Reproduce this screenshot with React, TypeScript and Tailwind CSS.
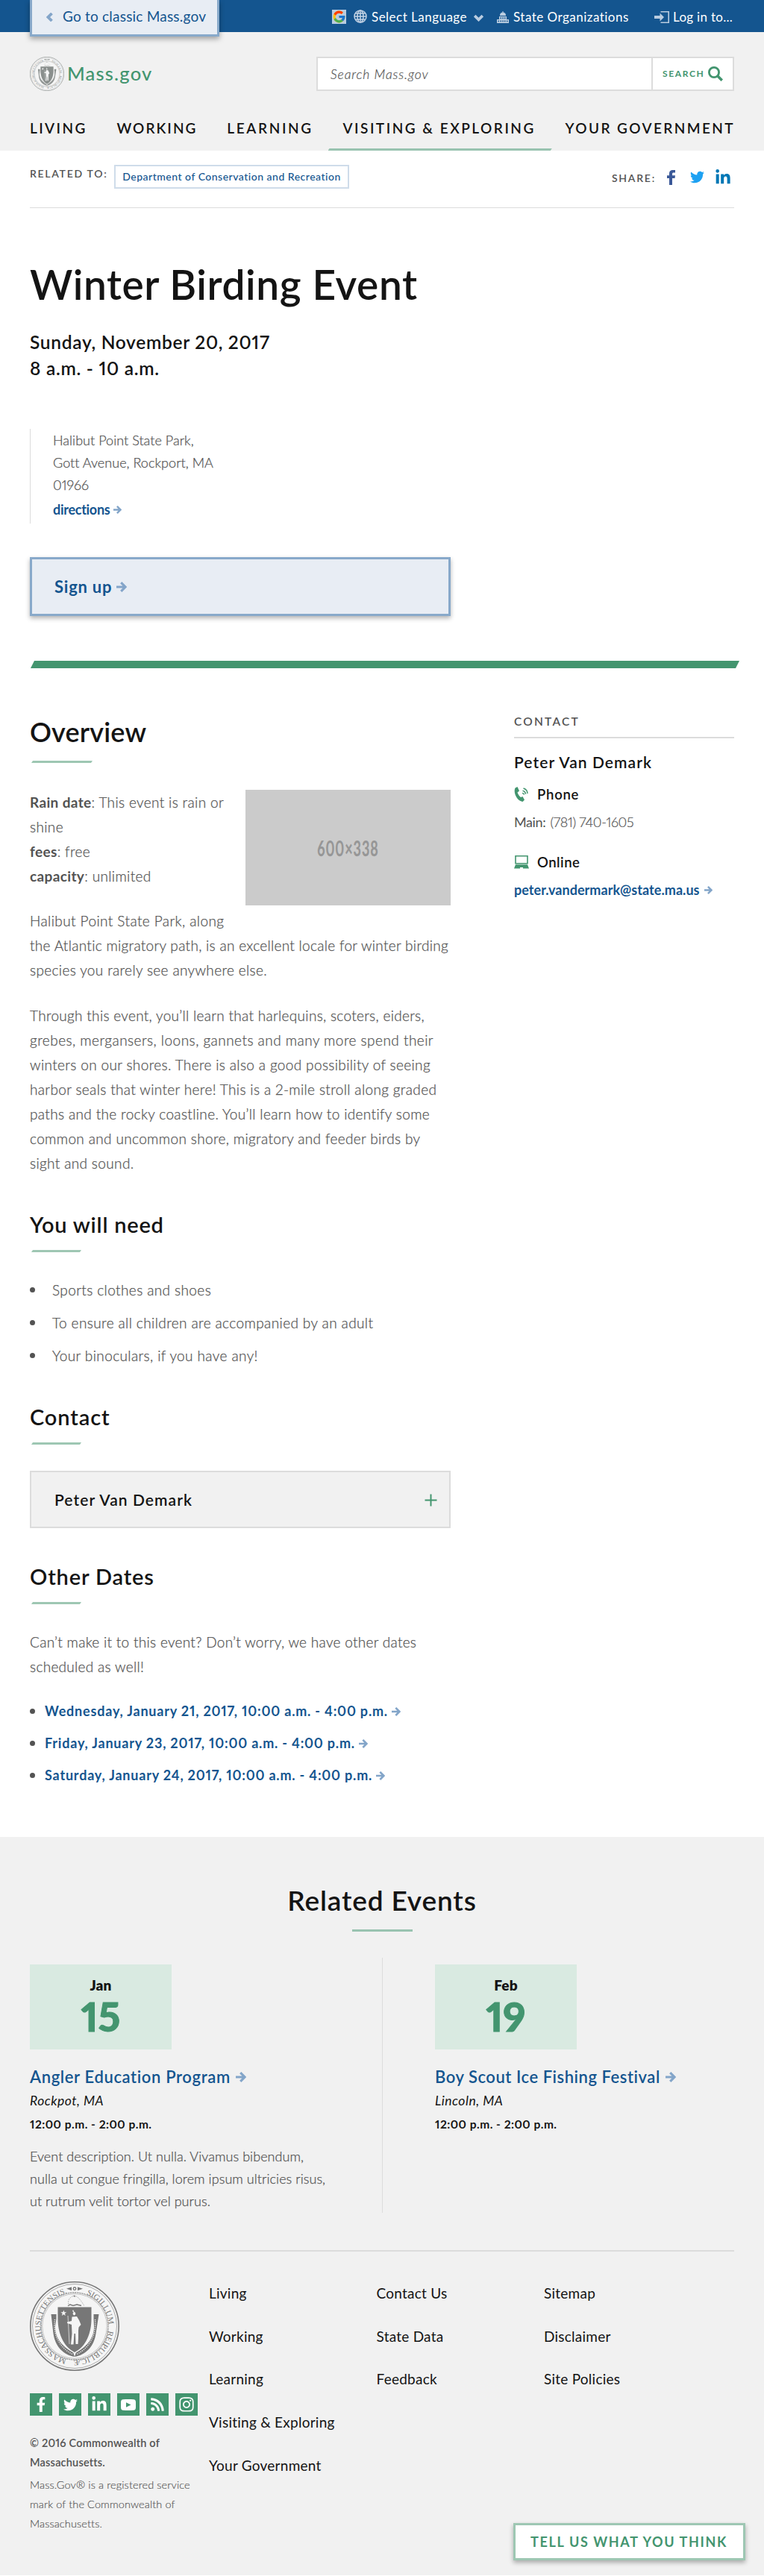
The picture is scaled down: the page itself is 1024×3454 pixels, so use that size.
import type { ReactNode } from "react";
import { FaFacebookF, FaTwitter, FaLinkedinIn, FaRss, FaInstagram } from "react-icons/fa";
import { FcGoogle } from "react-icons/fc";

function Arrow({ size = 11, className = "" }: { size?: number; className?: string }) {
  return (
    <svg width={size} height={size} viewBox="0 0 13 13" className={"inline-block shrink-0 " + className}>
      <path d="M0 6.5H10M5.8 1L11.2 6.5L5.8 12" fill="none" stroke="#83a5c9" strokeWidth="2.9" />
    </svg>
  );
}

function Seal({ size, color }: { size: number; color: string }) {
  const id = "ring" + size;
  return (
    <svg width={size} height={size} viewBox="0 0 120 120" fill="none" className="block shrink-0">
      <defs>
        <path id={id} d="M60 14.5A45.5 45.5 0 1 1 59.9 14.5" />
      </defs>
      <circle cx="60" cy="60" r="60" fill="#f5f5f5" />
      <circle cx="60" cy="60" r="59.2" stroke={color} strokeWidth="1.6" />
      <circle cx="60" cy="60" r="56.5" stroke={color} strokeWidth="0.6" />
      <circle cx="60" cy="60" r="45" stroke={color} strokeWidth="1.4" strokeDasharray="0.8 0.7" />
      <circle cx="60" cy="60" r="43.3" stroke={color} strokeWidth="0.4" />
      <g fill={color} className="font-['Liberation_Serif',serif] text-[10.5px]">
        <text>
          <textPath href={"#" + id} startOffset="16" textLength="53" lengthAdjust="spacingAndGlyphs">SIGILLUM</textPath>
        </text>
        <text>
          <textPath href={"#" + id} startOffset="77" textLength="67" lengthAdjust="spacingAndGlyphs">REIPUBLICÆ</textPath>
        </text>
        <text>
          <textPath href={"#" + id} startOffset="153" textLength="122" lengthAdjust="spacingAndGlyphs">MASSACHUSETTENSIS.</textPath>
        </text>
      </g>
      <circle cx="60" cy="9.8" r="1.8" stroke={color} strokeWidth="1.3" />
      <path d="M49 9.8L56 7.4V12.2ZM71 9.8L64 7.4V12.2Z" fill={color} />
      <path d="M52 31C50 24 55 20 60 19C66 21 70 28 73 33" stroke={color} strokeWidth="0.8" strokeDasharray="2 1" opacity="0.6" />
      <path d="M51 33L54 31L58 32.5L63 31L69 32.5" stroke={color} strokeWidth="1.4" />
      <path d="M58 20L60 18.5L61 21Z" fill={color} />
      <path d="M28.5 44H35.5V50L34 60C33.5 72 40 86 58 95L60 101C46 99 34 88 31.5 70Z" fill={color} />
      <path d="M92.5 44H85.5V50L86 60C86.5 72 80 86 62 95L60 101C74 99 86 88 88.5 70Z" fill={color} />
      <path d="M33.5 51C31 68 37 88 58 98M87.5 51C89 68 83 88 62 98" stroke="#f5f5f5" strokeWidth="1.4" strokeDasharray="1.2 1.4" />
      <path d="M36 33.5H84V50C84 70 77 88 60 96.5C43 88 36 70 36 50Z" fill="#f5f5f5" />
      <path d="M37.5 34.5H82.5V50C82.5 68 76 87 60 95C44 87 37.5 68 37.5 50Z" fill={color} />
      <path d="M45.3 38.5L46.3 41.3H49.2L46.9 43L47.8 46L45.3 44.2L42.8 46L43.7 43L41.4 41.3H44.3Z" fill="#f5f5f5" />
      <path d="M51 46L53 84" stroke="#f5f5f5" strokeWidth="0.7" />
      <path d="M59.5 41A1.8 2.2 0 1 1 59.4 41ZM56.5 47.5L63 47L66 52L68.5 58L65.500 61.500L65 66L65 76L64.5 84H61.5L61 70L59.5 70L58.5 84.5H55L56.5 70L56 58L50 56V54.5L56 53Z" fill="#f5f5f5" />
      <path d="M57 40L58 38L60 42Z" fill="#f5f5f5" />
    </svg>
  );
}

function Rule({ className = "" }: { className?: string }) {
  return <div className={"h-[3px] bg-[#9ec7b3] [clip-path:polygon(2px_0,100%_0,calc(100%_-_2px)_100%,0_100%)] " + className} />;
}

function Heading({ children, className = "" }: { children: ReactNode; className?: string }) {
  return (
    <div className={className}>
      <h2 className="text-[29px] font-semibold leading-[34px] text-[#141414]">{children}</h2>
      <Rule className="ml-0.5 mt-[17px] w-[67px]" />
    </div>
  );
}

function NavItem({ children, active, className }: { children: ReactNode; active?: boolean; className: string }) {
  return (
    <a className={"relative " + className}>
      {children}
      {active && (
        <span className="absolute -left-5 -right-[22px] bottom-0 h-[3px] bg-[#99c3b0] [clip-path:polygon(2px_0,100%_0,calc(100%_-_2px)_100%,0_100%)]" />
      )}
    </a>
  );
}

function Bullet() {
  return <span className="size-[7px] shrink-0 rounded-full bg-[#535353]" />;
}

function SocialBox({ children }: { children: ReactNode }) {
  return <span className="flex size-[30px] items-center justify-center bg-[#43956f] text-white">{children}</span>;
}

function EventCard(p: { month: string; day: string; title: string; titleClass: string; place: string; time: string; children?: ReactNode }) {
  return (
    <div>
      <div className="h-[114px] w-[190px] bg-[#d9eae1] pt-4 text-center">
        <div className="text-[19px] font-extrabold leading-6 tracking-[0.2px] text-[#141414]">{p.month}</div>
        <div className="mt-[3px] text-[54px] font-black leading-[54px] text-[#43956f] [-webkit-text-stroke:1px]">{p.day}</div>
      </div>
      <h3 className={"mt-[22px] flex items-center gap-[7px] whitespace-nowrap text-[22px] font-semibold leading-[30px] text-[#14558f] " + p.titleClass}>
        {p.title}
        <Arrow size={14} />
      </h3>
      <div className="mt-0.5 text-[17.5px] italic leading-[30px] tracking-[0.5px] text-[#141414]">{p.place}</div>
      <div className="mt-px text-[15.5px] font-bold leading-[30px] tracking-[0.5px] text-[#141414]">{p.time}</div>
      {p.children}
    </div>
  );
}

const DATES = [
  "Wednesday, January 21, 2017, 10:00 a.m. - 4:00 p.m.",
  "Friday, January 23, 2017, 10:00 a.m. - 4:00 p.m.",
  "Saturday, January 24, 2017, 10:00 a.m. - 4:00 p.m.",
];
const NEEDS = ["Sports clothes and shoes", "To ensure all children are accompanied by an adult", "Your binoculars, if you have any!"];
const LINKS = [
  ["Living", "Working", "Learning", "Visiting & Exploring", "Your Government"],
  ["Contact Us", "State Data", "Feedback"],
  ["Sitemap", "Disclaimer", "Site Policies"],
];

export default function App() {
  return (
    <div className="relative h-[3454px] w-[1024px] overflow-hidden bg-white font-[Lato,sans-serif] proportional-nums text-[#535353]">
      <div className="relative z-10 flex h-[43px] bg-[#14558f] px-10 text-[17px] leading-[45px] tracking-[0.48px] text-white">
        <a className="flex h-[49px] w-[254px] items-start border-x-[3px] border-b-[3px] border-[#88a9ca] bg-[#e8edf4] pl-[19px] text-[19px] leading-[43px] tracking-[0.21px] text-[#14558f] shadow-[0_3px_7px_rgba(0,0,0,0.35)]">
          <svg width="9" height="12" viewBox="0 0 9 12" className="mr-[13px] mt-[17px]">
            <path d="M7.5 1L2.5 6L7.5 11" fill="none" stroke="#83a5c9" strokeWidth="3.8" />
          </svg>
          Go to classic Mass.gov
        </a>
        <span className="ml-[151px] mt-[13px] flex size-[19px] items-center justify-center bg-[#b9cce0]">
          <FcGoogle size={19} />
        </span>
        <svg width="18" height="18" viewBox="0 0 18 18" fill="none" stroke="#c3d3e5" strokeWidth="1.5" className="ml-2.5 mt-[13px]">
          <circle cx="9" cy="9" r="8" />
          <ellipse cx="9" cy="9" rx="4" ry="8" />
          <path d="M9 1V17M1 9H17M2.5 5H15.5M2.5 13H15.5" />
        </svg>
        <span className="ml-1.5">Select Language</span>
        <svg width="13" height="10" viewBox="0 0 13 10" className="ml-[9px] mt-[19px]">
          <path d="M1.2 2L6.5 7.3L11.8 2" fill="none" stroke="#b9cce0" strokeWidth="3.7" />
        </svg>
        <svg width="16" height="16" viewBox="0 0 16 16" fill="#b9cce0" className="ml-[18px] mt-[15px]">
          <path d="M7.5 0h1v1.500A4.200 4.200 0 0 1 12 5.500V6H4V5.500A4.200 4.200 0 0 1 7.500 1.500Z" />
          <path fillRule="evenodd" d="M3 7H13V11H16V16H0V11H3ZM4.500 8.200V10.200H6V8.200ZM7.300 8.200V10.200H8.800V8.200ZM10 8.200V10.200H11.500V8.200ZM1.500 12.500V14.300H3V12.500ZM4.500 12.500V14.300H6V12.500ZM7.300 12.500V14.300H8.800V12.500ZM10 12.500V14.300H11.500V12.500ZM13 12.500V14.300H14.500V12.500Z" />
        </svg>
        <span className="ml-1.5 w-[155px] whitespace-nowrap">State Organizations</span>
        <svg width="20" height="16" viewBox="0 0 20 16" className="ml-[34px] mt-[15px]">
          <path d="M8.5 0.8H19.2V15.2H8.5" fill="none" stroke="#b9cce0" strokeWidth="1.6" />
          <path d="M0 6H7.5V2.5L13 8L7.5 13.5V10H0Z" fill="#b9cce0" />
        </svg>
        <span className="ml-[5px] whitespace-nowrap tracking-[0.3px]">Log in to...</span>
      </div>

      <header className="h-[159px] bg-[#f1f1f1] px-10 pt-[33px]">
        <div className="flex h-[46px] justify-between">
          <div className="flex">
            <Seal size={46} color="#8a8f8d" />
            <span className="ml-1 text-[25.5px] font-medium leading-[45px] tracking-[1.2px] text-[#43956f]">Mass.gov</span>
          </div>
          <div className="flex h-[46px] w-[560px] border-2 border-[#dcdcdc] bg-white">
            <span className="flex-1 pl-[17px] text-[17.5px] font-light italic leading-[43px] tracking-[0.9px] text-[#535353] [-webkit-text-stroke:0.2px]">Search Mass.gov</span>
            <span className="flex w-[109px] items-center border-l-2 border-[#dcdcdc] pl-[13px] text-[12px] font-bold tracking-[1.65px] text-[#43956f]">
              SEARCH
              <svg width="20" height="20" viewBox="0 0 20 20" fill="none" stroke="#43956f" className="ml-1">
                <circle cx="8" cy="8" r="6.6" strokeWidth="2.8" />
                <path d="M12.5 12.5L18.8 18.8" strokeWidth="3.6" />
              </svg>
            </span>
          </div>
        </div>
        <nav className="-mr-px mt-5 flex h-[60px] justify-between whitespace-nowrap text-[19px] font-semibold leading-[59px] text-[#141414]">
          <NavItem className="tracking-[2.4px]">LIVING</NavItem>
          <NavItem className="tracking-[2.05px]">WORKING</NavItem>
          <NavItem className="tracking-[2.65px]">LEARNING</NavItem>
          <NavItem active className="tracking-[2.5px]">VISITING &amp; EXPLORING</NavItem>
          <NavItem className="tracking-[2.4px]">YOUR GOVERNMENT</NavItem>
        </nav>
      </header>

      <main className="px-10">
        <div className="flex h-[77px] items-start justify-between border-b border-[#dcdcdc] pt-[19px]">
          <div className="flex">
            <span className="w-[113px] whitespace-nowrap text-[14px] font-semibold leading-[23px] tracking-[1.7px]">RELATED TO:</span>
            <span className="flex h-8 w-[315px] items-center justify-center whitespace-nowrap border-2 border-[#cfdcea] text-[14px] font-medium leading-7 tracking-[0.5px] text-[#14558f]">
              Department of Conservation and Recreation
            </span>
          </div>
          <div className="flex items-center">
            <span className="mt-0.5 text-[14px] font-semibold leading-[31px] tracking-[1.75px]">SHARE:</span>
            <svg width="11" height="20" viewBox="0 0 11 20" className="ml-[15px]">
              <path d="M3 20V11H0V7.3H3V4.5C3 1.5 4.8 0 7.6 0H11V3.6H9C7.6 3.6 7 4.2 7 5.3V7.3H11L10.5 11H7V20Z" fill="#3b5998" />
            </svg>
            <FaTwitter size={19} color="#1da1f2" className="ml-5" />
            <FaLinkedinIn size={22} color="#0077b5" className="ml-3.5 mr-1" />
          </div>
        </div>

        <h1 className="mt-[70px] text-[55px] font-semibold leading-[64px] tracking-[0.59px] text-[#141414]">Winter Birding Event</h1>
        <p className="mt-[29px] text-[24.5px] font-semibold leading-[34.5px] tracking-[0.7px] text-[#141414]">
          Sunday, November 20, 2017
          <br />8 a.m. - 10 a.m.
        </p>

        <div className="mt-[65px] h-[127px] border-l border-[#dcdcdc] pl-[30px] text-[18px]">
          <p className="-mt-px font-light leading-[30px] tracking-[0.04px] [-webkit-text-stroke:0.25px]">
            Halibut Point State Park,
            <br />
            Gott Avenue, Rockport, MA
            <br />
            01966
          </p>
          <a className="mt-[3px] flex items-center gap-[5px] font-bold leading-[30px] tracking-[-0.28px] text-[#14558f]">
            directions <Arrow />
          </a>
        </div>

        <a className="mt-[45px] flex h-[79px] w-[564px] items-center gap-1.5 border-[3px] border-[#88a9ca] bg-[#e8edf4] pl-[30px] text-[22px] font-bold leading-[30px] tracking-[0.77px] text-[#14558f] shadow-[0_3px_6px_rgba(0,0,0,0.3)]">
          Sign up <Arrow size={14} />
        </a>

        <div className="ml-px mt-[60px] h-2.5 w-[950px] bg-[#43956f] [clip-path:polygon(5px_0,100%_0,calc(100%_-_5px)_100%,0_100%)]" />

        <div className="flex justify-between">
          <div className="w-[564px] text-[19px] font-light leading-[33px] tracking-[0.36px]">
            <h2 className="mt-[63px] text-[36px] font-semibold leading-[44px] tracking-[0.17px] text-[#141414]">Overview</h2>
            <Rule className="ml-0.5 mt-[17px] w-[82px]" />

            <div className="mt-9 whitespace-nowrap [-webkit-text-stroke:0.25px]">
              <div className="float-right mb-3 ml-2 flex h-[155px] w-[275px] items-center justify-center bg-[#cbcbcb]">
                <span className="scale-x-[0.64] text-[28px] font-bold leading-none tracking-[1.5px] text-[#969696]">600×338</span>
              </div>
              <p>
                <b className="font-bold [-webkit-text-stroke:0]">Rain date</b>: This event is rain or
                <br />
                shine
                <br />
                <b className="font-bold [-webkit-text-stroke:0]">fees</b>: free
                <br />
                <b className="font-bold [-webkit-text-stroke:0]">capacity</b>: unlimited
              </p>
              <p className="mt-[27px]">
                <span className="tracking-[0.42px]">Halibut Point State Park, along</span>
                <br />
                <span className="tracking-[0.31px]">the Atlantic migratory path, is an excellent locale for winter birding</span>
                <br />
                species you rarely see anywhere else.
              </p>
              <p className="mt-7">
                <span className="tracking-[0.31px]">Through this event, you’ll learn that harlequins, scoters, eiders,</span>
                <br />
                <span className="tracking-[0.47px]">grebes, mergansers, loons, gannets and many more spend their</span>
                <br />
                winters on our shores. There is also a good possibility of seeing
                <br />
                harbor seals that winter here! This is a 2-mile stroll along graded
                <br />
                paths and the rocky coastline. You’ll learn how to identify some
                <br />
                common and uncommon shore, migratory and feeder birds by
                <br />
                sight and sound.
              </p>
            </div>

            <Heading className="mt-[49px] tracking-[0.78px]">You will need</Heading>
            <ul className="mt-[34px] flex flex-col gap-[11px] tracking-[0.4px] [-webkit-text-stroke:0.25px]">
              {NEEDS.map((n) => (
                <li key={n} className="flex items-center gap-[23px]">
                  <Bullet />
                  {n}
                </li>
              ))}
            </ul>

            <Heading className="mt-[49px] tracking-[0.9px]">Contact</Heading>
            <div className="mt-[35px] flex h-[77px] items-center justify-between border-2 border-[#dcdcdc] bg-[#f1f1f1] pl-[31px] pr-4">
              <span className="text-[21px] font-semibold tracking-[1.07px] text-[#141414]">Peter Van Demark</span>
              <svg width="17" height="17" viewBox="0 0 17 17" className="mt-0.5">
                <path d="M8.500 0.500V16.500M0.500 8.500H16.500" stroke="#43956f" strokeWidth="2" />
              </svg>
            </div>

            <Heading className="mt-12 tracking-[0.85px]">Other Dates</Heading>
            <p className="mt-[34px] tracking-[0.3px] [-webkit-text-stroke:0.25px]">
              Can’t make it to this event? Don’t worry, we have other dates
              <br />
              scheduled as well!
            </p>
            <ul className="mt-[27px] flex flex-col gap-2.5">
              {DATES.map((d) => (
                <li key={d} className="flex items-center gap-[13px]">
                  <Bullet />
                  <a className="flex items-center gap-[5px] whitespace-nowrap text-[18px] font-bold tracking-[0.81px] text-[#14558f]">
                    {d}
                    <Arrow size={12} />
                  </a>
                </li>
              ))}
            </ul>
          </div>

          <aside className="w-[295px] pt-[59px] text-[18px] leading-[30px]">
            <h2 className="text-[15.5px] font-semibold leading-6 tracking-[2.2px]">CONTACT</h2>
            <div className="mt-[9px] h-0.5 bg-[#dcdcdc]" />
            <h3 className="mt-[17px] text-[21px] font-semibold tracking-[1.07px] text-[#141414]">Peter Van Demark</h3>
            <div className="mt-[13px] flex items-center text-[18.5px] font-semibold tracking-[0.75px] text-[#141414]">
              <svg width="19" height="20" viewBox="0 0 19 20" className="mr-3">
                <path d="M1.5 1.5L4.5 0L7 5.5L4.5 7.5C5.5 10.5 7 12.5 9 14L11.5 13L14 17.5L11.5 20C4 19 -1.5 8 1.5 1.5Z" fill="#43956f" />
                <path d="M11 8.5A2.5 2.5 0 0 1 13.5 10.5M11.5 5.3A5 5 0 0 1 15.5 9.8M12.5 2A7.5 7.5 0 0 1 18 9" fill="none" stroke="#43956f" strokeWidth="1.5" />
              </svg>
              Phone
            </div>
            <div className="mt-[7px] font-light tracking-[-0.35px] [-webkit-text-stroke:0.2px]">
              <span className="font-normal tracking-[-0.4px] [-webkit-text-stroke:0]">Main: </span>
              <span className="ml-0.5">(781) 740-1605</span>
            </div>
            <div className="mt-6 flex items-center text-[18.5px] font-semibold tracking-[0.5px] text-[#141414]">
              <svg width="20" height="18" viewBox="0 0 20 18" className="mr-[11px]">
                <path d="M2 0.8H18V10.8H2Z" fill="none" stroke="#43956f" strokeWidth="1.6" />
                <path fillRule="evenodd" d="M2 12.3H18L20 17.5H0ZM8 16V17.5H12V16Z" fill="#43956f" />
              </svg>
              Online
            </div>
            <a className="mt-[7px] flex items-center gap-1.5 font-bold tracking-[0.05px] text-[#14558f]">
              peter.vandermark@state.ma.us <Arrow />
            </a>
          </aside>
        </div>
      </main>

      <section className="mt-[66px] bg-[#f1f1f1] px-10 pb-[50px] pt-[63px]">
        <h2 className="text-center text-[37px] font-semibold leading-[44px] tracking-[0.84px] text-[#141414]">Related Events</h2>
        <div className="mx-auto mt-[17px] h-[3px] w-[81px] bg-[#99c3b0]" />
        <div className="mt-[35px] flex h-[342px]">
          <div className="w-[472px] pt-[9px]">
            <EventCard month="Jan" day="15" title="Angler Education Program" titleClass="tracking-[0.63px]" place="Rockpot, MA" time="12:00 p.m. - 2:00 p.m.">
              <p className="mt-[13px] whitespace-nowrap text-[18px] font-light leading-[30px] tracking-[0.06px] [-webkit-text-stroke:0.25px]">
                Event description. Ut nulla. Vivamus bibendum,
                <br />
                nulla ut congue fringilla, lorem ipsum ultricies risus,
                <br />
                ut rutrum velit tortor vel purus.
              </p>
            </EventCard>
          </div>
          <div className="flex-1 border-l border-[#dcdcdc] pl-[70px] pt-[9px]">
            <EventCard month="Feb" day="19" title="Boy Scout Ice Fishing Festival" titleClass="tracking-[0.54px]" place="Lincoln, MA" time="12:00 p.m. - 2:00 p.m." />
          </div>
        </div>
      </section>

      <footer className="h-[436px] bg-[#f1f1f1] px-10">
        <div className="h-0.5 bg-[#dcdcdc]" />
        <div className="flex pt-10">
          <div className="w-60">
            <Seal size={120} color="#777777" />
            <div className="mt-[30px] flex gap-[9px]">
              <SocialBox>
                <FaFacebookF size={20} />
              </SocialBox>
              <SocialBox>
                <FaTwitter size={19} />
              </SocialBox>
              <SocialBox>
                <FaLinkedinIn size={22} />
              </SocialBox>
              <SocialBox>
                <svg width="20" height="15" viewBox="0 0 20 15">
                  <path fillRule="evenodd" d="M3 0.3C7 -0.1 13 -0.1 17 0.3Q20 0.5 20 4V11Q20 14.5 17 14.7C13 15.1 7 15.1 3 14.7Q0 14.5 0 11V4Q0 0.5 3 0.3ZM7 4.3V10.7L13.5 7.5Z" fill="#fff" />
                </svg>
              </SocialBox>
              <SocialBox>
                <FaRss size={20} />
              </SocialBox>
              <SocialBox>
                <FaInstagram size={22} />
              </SocialBox>
            </div>
            <div className="mt-6 text-[14.5px] leading-[26px]">
              <p className="font-semibold tracking-[0.2px]">
                © 2016 Commonwealth of
                <br />
                Massachusetts.
              </p>
              <p className="mt-1 font-light tracking-[0.12px] [-webkit-text-stroke:0.15px]">
                Mass.Gov® is a registered service
                <br />
                mark of the Commonwealth of
                <br />
                Massachusetts.
              </p>
            </div>
          </div>
          <div className="-mt-[13px] flex text-[19px] leading-[57.7px] tracking-[0.25px] text-[#141414]">
            {LINKS.map((col) => (
              <ul key={col[0]} className="w-[224.5px]">
                {col.map((l) => (
                  <li key={l}>{l}</li>
                ))}
              </ul>
            ))}
          </div>
        </div>
      </footer>

      <a className="absolute bottom-[21px] right-[25px] flex h-[50px] w-[311px] items-center whitespace-nowrap border-[3px] border-[#9ec7b3] bg-white pl-5 text-[18px] font-bold tracking-[1.64px] text-[#43956f] shadow-[0_3px_6px_rgba(0,0,0,0.3)]">
        TELL US WHAT YOU THINK
      </a>
    </div>
  );
}
